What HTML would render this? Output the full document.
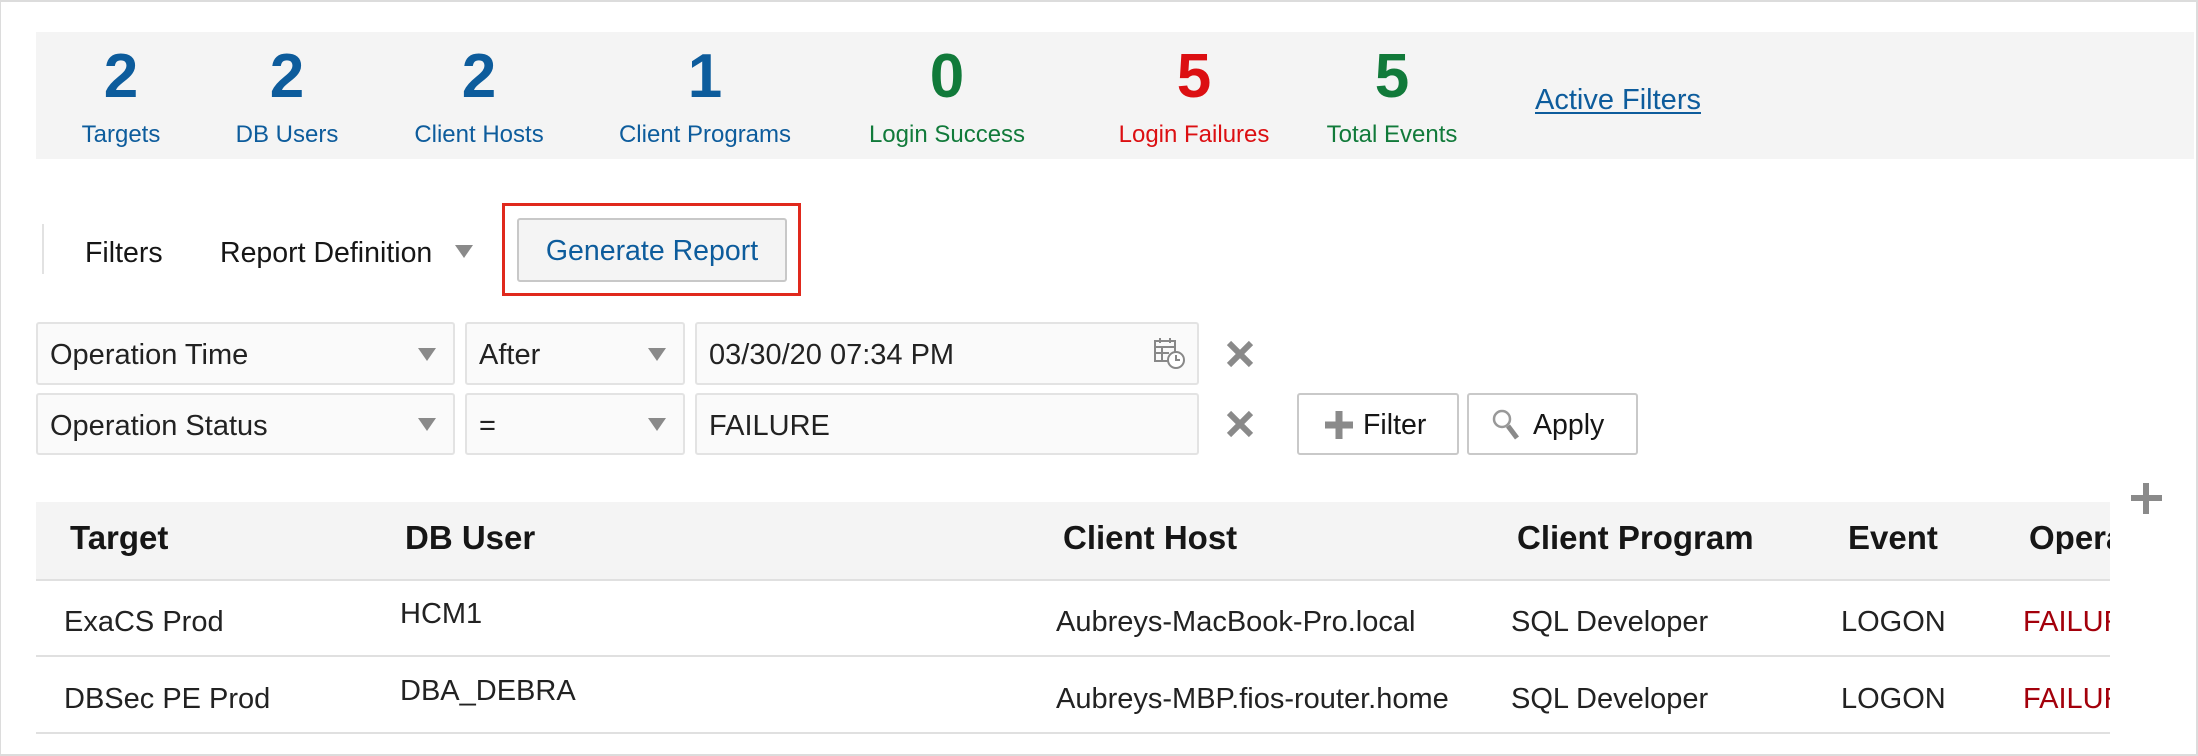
<!DOCTYPE html>
<html><head><style>
*{margin:0;padding:0;box-sizing:border-box}
body{width:2198px;height:756px;background:#fff;font-family:"Liberation Sans",Arial,sans-serif;position:relative;overflow:hidden;color:#161616}
.frame{position:absolute;left:0;top:0;width:2198px;height:756px;border:2px solid #dcdcdc;border-left-width:1px}
.abs{position:absolute;white-space:nowrap}
.panel{position:absolute;left:36px;top:32px;width:2158px;height:127px;background:#f4f4f4}
.num{position:absolute;font-weight:bold;font-size:62px;transform:translateX(-50%);top:46px;line-height:1}
.lbl{position:absolute;font-size:24px;transform:translateX(-50%);top:123px;line-height:1;white-space:nowrap}
.b{color:#0d5c9c}.g{color:#117a3a}.r{color:#dc0f12}
.field{position:absolute;background:#fafafa;border:2px solid #e3e3e3;border-radius:3px;font-size:29px;line-height:1;padding-left:12px;padding-top:4px;display:flex;align-items:center;color:#222;white-space:nowrap}
.tri{position:absolute;width:0;height:0;border-left:9px solid transparent;border-right:9px solid transparent;border-top:13px solid #8a8a8a}
.btn{position:absolute;background:#fff;border:2px solid #c9c9c9;border-radius:3px;font-size:28.5px;display:flex;align-items:center}
.th{position:absolute;font-weight:bold;font-size:33px;top:521px;line-height:1;white-space:nowrap}
.td{position:absolute;font-size:29px;line-height:1;color:#222;white-space:nowrap}
.line{position:absolute;left:36px;width:2074px;height:2px;background:#e0e0e0}
</style></head><body>
<div class="frame"></div>
<div class="panel"></div>
<div class="num b" style="left:121px">2</div><div class="lbl b" style="left:121px">Targets</div>
<div class="num b" style="left:287px">2</div><div class="lbl b" style="left:287px">DB Users</div>
<div class="num b" style="left:479px">2</div><div class="lbl b" style="left:479px">Client Hosts</div>
<div class="num b" style="left:705px">1</div><div class="lbl b" style="left:705px">Client Programs</div>
<div class="num g" style="left:947px">0</div><div class="lbl g" style="left:947px">Login Success</div>
<div class="num r" style="left:1194px">5</div><div class="lbl r" style="left:1194px">Login Failures</div>
<div class="num g" style="left:1392px">5</div><div class="lbl g" style="left:1392px">Total Events</div>
<div class="abs b" style="left:1535px;top:84px;font-size:29px;text-decoration:underline;text-underline-offset:3px">Active Filters</div>

<div class="abs" style="left:42px;top:224px;width:2px;height:50px;background:#e2e2e2"></div>
<div class="abs" style="left:85px;top:237px;font-size:28.5px">Filters</div>
<div class="abs" style="left:220px;top:237px;font-size:28.5px">Report Definition</div>
<div class="tri" style="left:455px;top:245px"></div>
<div class="abs" style="left:502px;top:203px;width:299px;height:93px;border:3px solid #e0291d"></div>
<div class="abs" style="left:517px;top:218px;width:270px;height:64px;background:#f4f4f4;border:2px solid #c8c8c8;border-radius:3px;color:#0d5c9c;font-size:28.5px;display:flex;align-items:center;justify-content:center;padding-top:2px">Generate Report</div>

<div class="field" style="left:36px;top:322px;width:419px;height:63px">Operation Time</div>
<div class="tri" style="left:418px;top:348px"></div>
<div class="field" style="left:465px;top:322px;width:220px;height:63px">After</div>
<div class="tri" style="left:648px;top:348px"></div>
<div class="field" style="left:695px;top:322px;width:504px;height:63px">03/30/20 07:34 PM</div>
<svg class="abs" style="left:1153px;top:336px" width="34" height="34" viewBox="0 0 34 34"><g fill="none" stroke="#888" stroke-width="2"><rect x="2" y="5" width="20" height="20"/><line x1="2" y1="11" x2="22" y2="11"/><line x1="2" y1="17" x2="16" y2="17"/><line x1="9" y1="11" x2="9" y2="25"/><line x1="7" y1="2" x2="7" y2="7"/><line x1="17" y1="2" x2="17" y2="7"/><circle cx="23" cy="24" r="8" fill="#fff"/><path d="M23 19v5h4"/></g></svg>
<svg class="abs" style="left:1224px;top:338px" width="32" height="32" viewBox="0 0 32 32"><path d="M5 5L27 27M27 5L5 27" stroke="#8a8a8a" stroke-width="6"/></svg>

<div class="field" style="left:36px;top:393px;width:419px;height:62px">Operation Status</div>
<div class="tri" style="left:418px;top:418px"></div>
<div class="field" style="left:465px;top:393px;width:220px;height:62px">=</div>
<div class="tri" style="left:648px;top:418px"></div>
<div class="field" style="left:695px;top:393px;width:504px;height:62px">FAILURE</div>
<svg class="abs" style="left:1224px;top:408px" width="32" height="32" viewBox="0 0 32 32"><path d="M5 5L27 27M27 5L5 27" stroke="#8a8a8a" stroke-width="6"/></svg>
<div class="btn" style="left:1297px;top:393px;width:162px;height:62px;padding-left:24px;padding-top:2px"><svg width="32" height="32" viewBox="0 0 32 32" style="margin-right:8px"><path d="M16 2v28M2 16h28" stroke="#8a8a8a" stroke-width="7"/></svg>Filter</div>
<div class="btn" style="left:1467px;top:393px;width:171px;height:62px;padding-left:22px;padding-top:2px"><svg width="32" height="34" viewBox="0 0 32 34" style="margin-right:10px"><circle cx="11" cy="11" r="8" fill="none" stroke="#999" stroke-width="2.5"/><path d="M17 18l9 12" stroke="#8a8a8a" stroke-width="5"/></svg>Apply</div>

<svg class="abs" style="left:2130px;top:482px" width="32" height="32" viewBox="0 0 32 32"><path d="M16 1v31M1 16h31" stroke="#8a8a8a" stroke-width="6"/></svg>

<div class="abs" style="left:36px;top:502px;width:2074px;height:77px;background:#f4f4f4"></div>
<div class="line" style="top:579px"></div>
<div class="th" style="left:70px">Target</div>
<div class="th" style="left:405px">DB User</div>
<div class="th" style="left:1063px">Client Host</div>
<div class="th" style="left:1517px">Client Program</div>
<div class="th" style="left:1848px">Event</div>
<div class="th" style="left:2029px;width:81px;overflow:hidden">Operation</div>

<div class="td" style="left:64px;top:608px">ExaCS Prod</div>
<div class="td" style="left:400px;top:600px">HCM1</div>
<div class="td" style="left:1056px;top:608px">Aubreys-MacBook-Pro.local</div>
<div class="td" style="left:1511px;top:608px">SQL Developer</div>
<div class="td" style="left:1841px;top:608px">LOGON</div>
<div class="td" style="left:2023px;top:608px;width:87px;overflow:hidden;color:#a3000b">FAILURE</div>
<div class="line" style="top:655px"></div>

<div class="td" style="left:64px;top:685px">DBSec PE Prod</div>
<div class="td" style="left:400px;top:677px">DBA_DEBRA</div>
<div class="td" style="left:1056px;top:685px">Aubreys-MBP.fios-router.home</div>
<div class="td" style="left:1511px;top:685px">SQL Developer</div>
<div class="td" style="left:1841px;top:685px">LOGON</div>
<div class="td" style="left:2023px;top:685px;width:87px;overflow:hidden;color:#a3000b">FAILURE</div>
<div class="line" style="top:732px"></div>
</body></html>
